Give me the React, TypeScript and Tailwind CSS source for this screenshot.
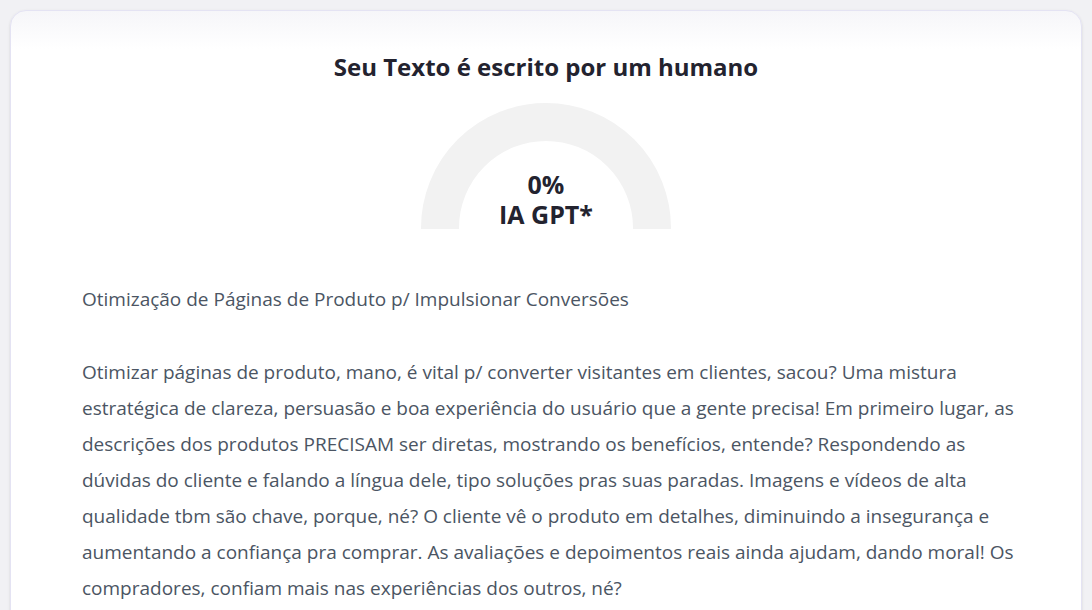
export default function App() {
    return (
        <div
            className="min-h-[610px] bg-[#f1f1f4] p-[10px]"
            style={{ fontFamily: '"Open Sans", "Noto Sans", sans-serif' }}
        >
            <div className="rounded-2xl border border-[#e4e3f3] bg-gradient-to-b from-[#f6f6f9] via-white via-[6%] to-white pt-[40px] pr-[57px] pb-10 pl-[71px] shadow-sm">
                <h1 className="pr-[14px] text-center text-[24px] leading-[32px] font-bold text-[#23232f]">
                    Seu Texto é escrito por um humano
                </h1>
                <div className="mt-[20px] flex justify-center pr-[14px]">
                    <div className="relative h-[126px] w-[250px]">
                        <div className="h-[126px] w-[250px] overflow-hidden">
                            <div className="h-[250px] w-[250px] rounded-full border-[38px] border-[#f2f2f2]" />
                        </div>
                        <p className="absolute inset-x-0 bottom-0 text-center text-[25px] leading-[30px] font-bold text-[#23232f]">
                            0%
                            <br />
                            IA GPT*
                        </p>
                    </div>
                </div>
                <div className="mt-[52px] text-[19px] leading-[36px] text-[#4b5563]">
                    <p>Otimização de Páginas de Produto p/ Impulsionar Conversões</p>
                    <p className="mt-[37px]">
                        Otimizar páginas de produto, mano, é vital p/ converter visitantes em clientes, sacou? Uma mistura estratégica de clareza, persuasão e boa experiência do usuário que a gente precisa! Em primeiro lugar, as descrições dos produtos PRECISAM ser diretas, mostrando os benefícios, entende? Respondendo as dúvidas do cliente e falando a língua dele, tipo soluções pras suas paradas. Imagens e vídeos de alta qualidade tbm são chave, porque, né? O cliente vê o produto em detalhes, diminuindo a insegurança e aumentando a confiança pra comprar. As avaliações e depoimentos reais ainda ajudam, dando moral! Os compradores, confiam mais nas experiências dos outros, né?
                    </p>
                </div>
            </div>
        </div>
    );
}
